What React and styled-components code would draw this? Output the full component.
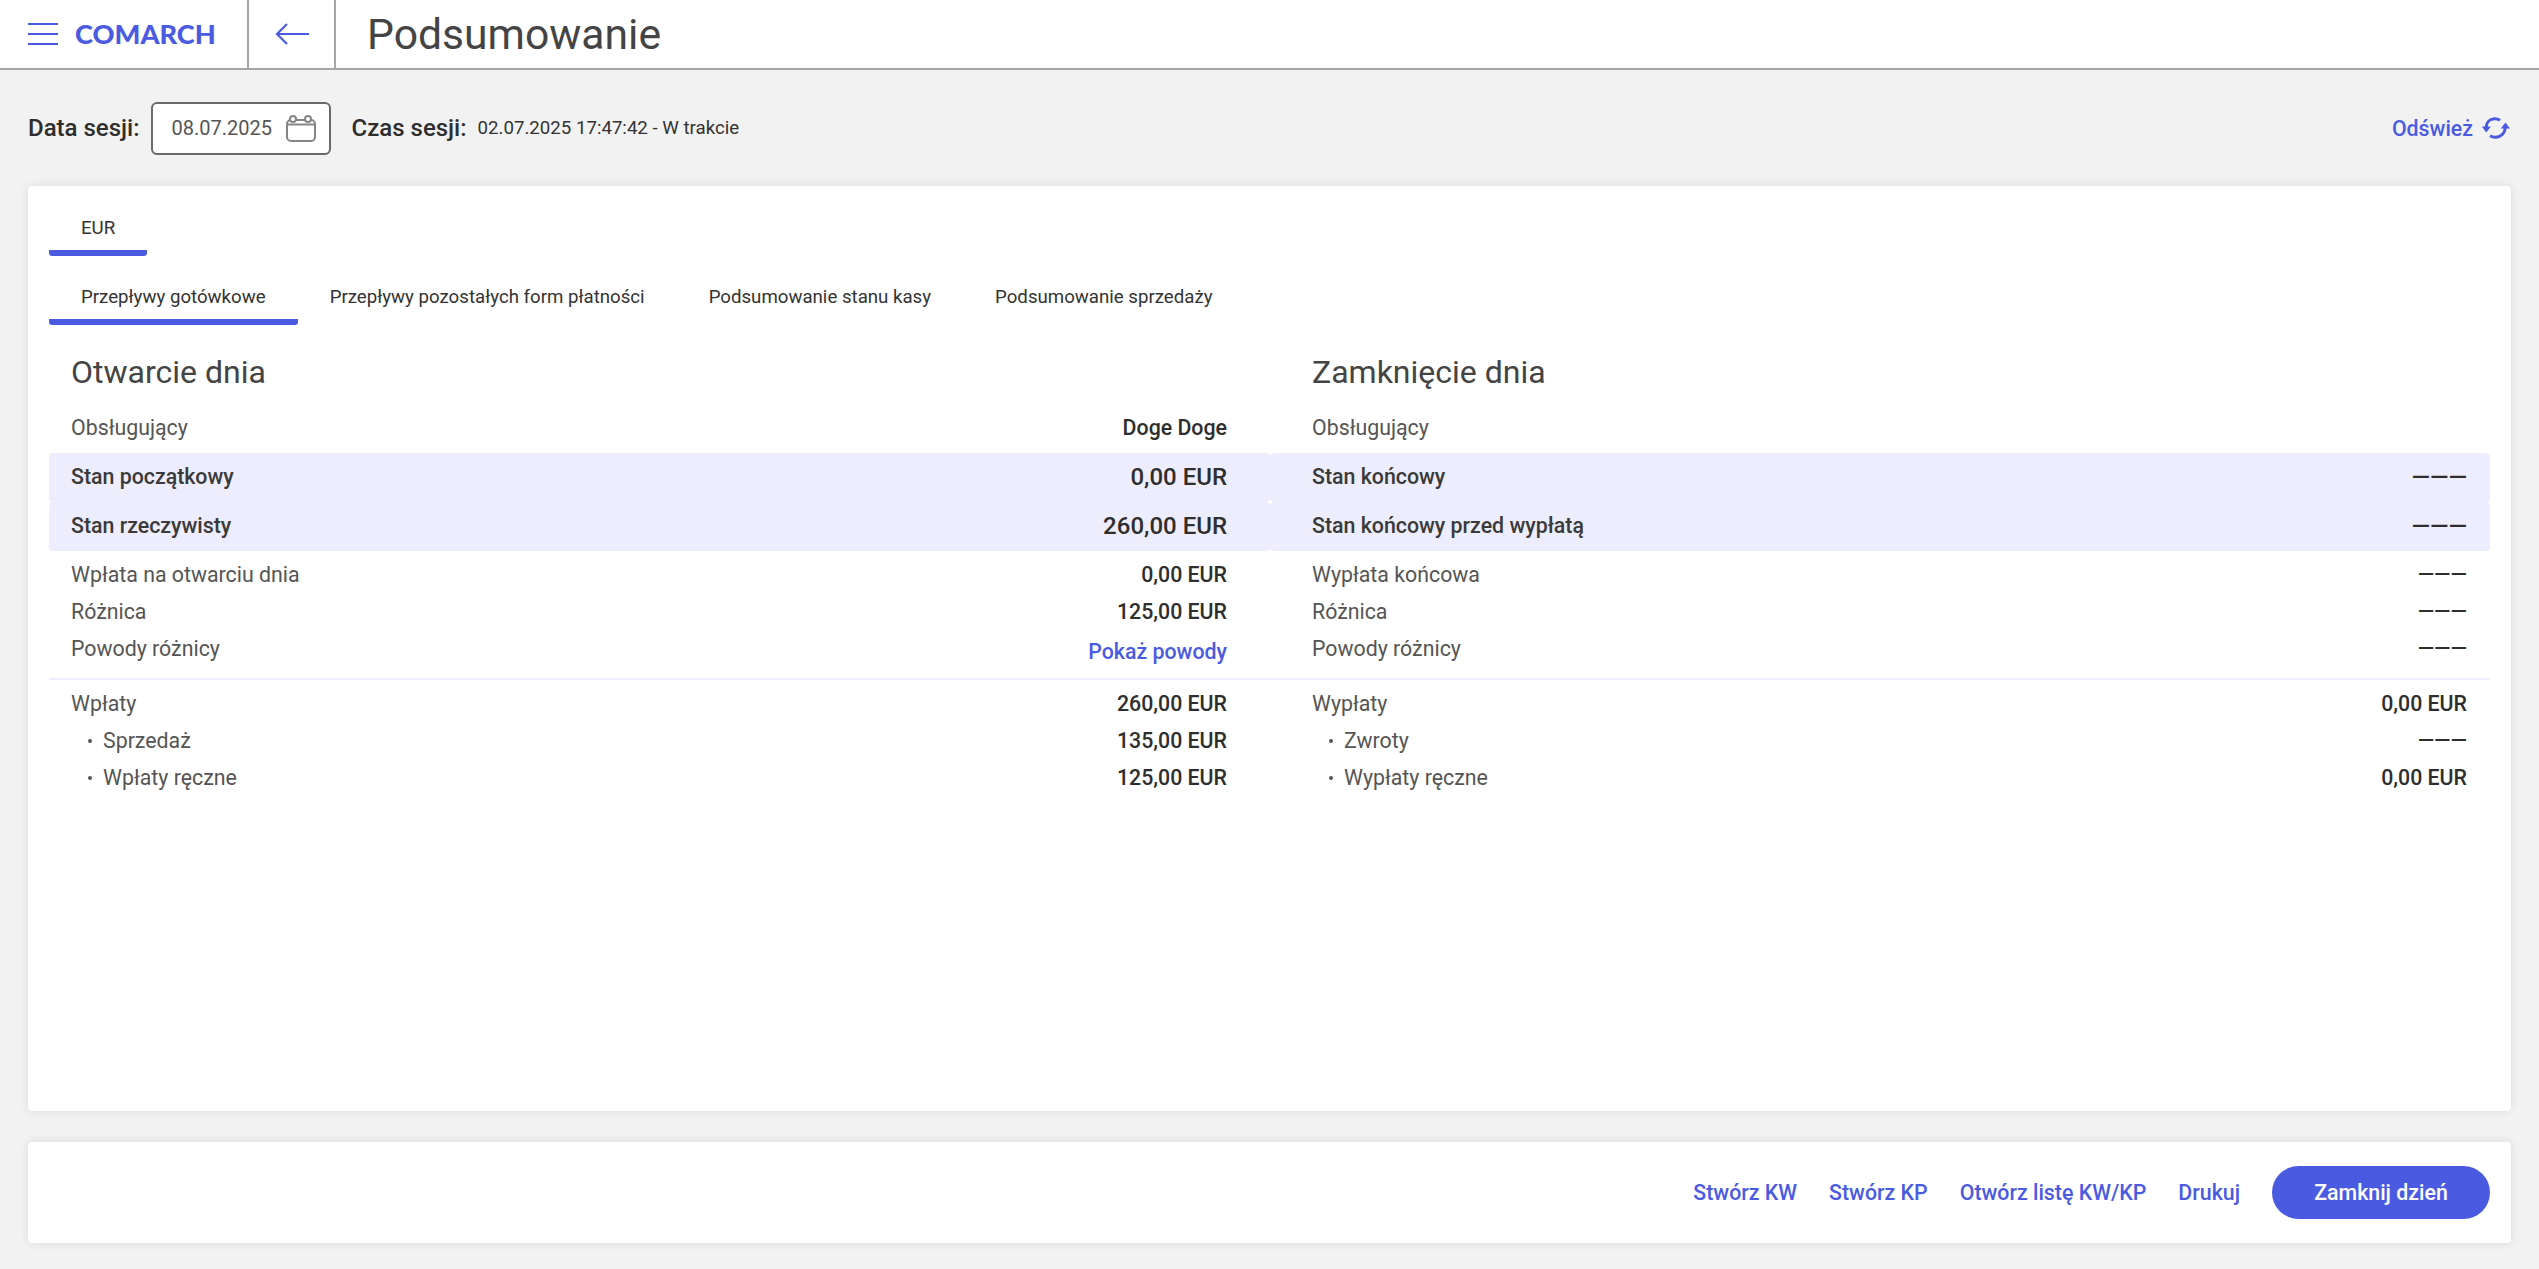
import React from "react";
import styled, { createGlobalStyle } from "styled-components";

const BLUE = "#4a5be2";

const Global = createGlobalStyle`
  html, body { margin: 0; padding: 0; height: 100%; background: #f2f2f2; }
  body { font-family: Roboto, "Liberation Sans", sans-serif; overflow: hidden; }
  #root { height: 100%; }
  * { box-sizing: border-box; }
`;

const Page = styled.div`
  height: 100vh;
  display: flex;
  flex-direction: column;
  padding-bottom: 26px;
`;

const Header = styled.header`
  height: 70px;
  flex: none;
  display: flex;
  align-items: stretch;
  background: #fff;
  border-bottom: 2px solid #a6a6a6;
`;

const Brand = styled.div`
  width: 249px;
  padding-left: 28px;
  display: flex;
  align-items: center;
  gap: 17px;
  border-right: 2px solid #a6a6a6;
`;

const Logo = styled.span`
  font-family: Lato, sans-serif;
  font-weight: 900;
  font-size: 27.2px;
  line-height: 1;
  color: ${BLUE};
`;

const BackButton = styled.div`
  width: 87px;
  display: flex;
  align-items: center;
  justify-content: center;
  border-right: 2px solid #a6a6a6;
`;

const PageTitle = styled.h1`
  margin: 0 0 0 31px;
  align-self: center;
  font-size: 42.67px;
  font-weight: 400;
  color: #444;
  line-height: 1;
`;

const Toolbar = styled.div`
  height: 116px;
  flex: none;
  padding: 0 29px 0 28px;
  display: flex;
  align-items: center;
`;

const ToolLabel = styled.span`
  font-size: 24px;
  font-weight: 500;
  color: #2e2e2e;
`;

const DateInput = styled.div`
  width: 180px;
  height: 53px;
  margin: 0 21px 0 11px;
  padding: 0 13px 0 19px;
  display: flex;
  align-items: center;
  justify-content: space-between;
  background: #fff;
  border: 2px solid #6a6a6a;
  border-radius: 6px;
  font-size: 20px;
  color: #555;
`;

const SessionValue = styled.span`
  margin-left: 11px;
  font-size: 18.67px;
  color: #333;
`;

const Refresh = styled.div`
  margin-left: auto;
  display: flex;
  align-items: center;
  gap: 9px;
  font-size: 21.33px;
  font-weight: 500;
  color: ${BLUE};
`;

const Card = styled.main`
  flex: 1;
  margin: 0 28px;
  padding: 20px 21px 0;
  background: #fff;
  border-radius: 4px;
  box-shadow: 0 0 10px rgba(0, 0, 0, 0.1);
`;

const TabBar = styled.div`
  display: flex;
  margin-bottom: ${(p) => p.$gap || 0}px;
`;

const Tab = styled.div`
  height: 50px;
  padding: 11px 32px 0;
  font-size: 18.67px;
  line-height: 22px;
  color: #333;
  border-bottom: 6px solid ${(p) => (p.$active ? BLUE : "transparent")};
  border-radius: 3px;
  white-space: nowrap;
`;

const Columns = styled.div`
  display: grid;
  grid-template-columns: 1221px 1220px;
  padding-top: 24px;
`;

const Column = styled.section`
  display: flex;
  flex-direction: column;
`;

const SectionTitle = styled.h2`
  margin: 0 0 14px;
  height: 46px;
  padding-left: ${(p) => (p.$side === "right" ? 42 : 22)}px;
  font-size: 32px;
  line-height: 46px;
  font-weight: 400;
  color: #444;
`;

const Row = styled.div`
  display: flex;
  align-items: center;
  justify-content: space-between;
  height: 37px;
  padding: ${(p) => (p.$side === "right" ? "0 23px 0 42px" : "0 43px 0 22px")};
`;

const BandGroup = styled.div`
  margin: 7px 0 5px;
`;

const BandRow = styled(Row)`
  height: 49px;
  padding-bottom: 2px;
  background: #eeedfd;
  border-radius: 4px;
`;

const Label = styled.span`
  font-size: 21.33px;
  color: #555;
`;

const StrongLabel = styled.span`
  font-size: 21.33px;
  font-weight: 500;
  color: #3a3a3a;
`;

const SubLabel = styled(Label)`
  display: flex;
  align-items: center;
  padding-left: 17px;
  gap: 11px;
  &::before {
    content: "";
    width: 4px;
    height: 4px;
    border-radius: 50%;
    background: #555;
  }
`;

const Value = styled.span`
  font-size: 21.33px;
  font-weight: 500;
  color: #2e2e2e;
`;

const BigValue = styled(Value)`
  font-size: 24px;
`;

const LinkValue = styled(Value)`
  margin-top: 6px;
  color: ${BLUE};
`;

const Separator = styled.div`
  height: 2px;
  margin: 11px 0 5px;
  background: #eeedfd;
`;

const Footer = styled.footer`
  height: 101px;
  flex: none;
  margin: 31px 28px 0;
  padding-right: 21px;
  display: flex;
  align-items: center;
  justify-content: flex-end;
  gap: 32px;
  background: #fff;
  border-radius: 4px;
  box-shadow: 0 0 10px rgba(0, 0, 0, 0.1);
`;

const FooterLink = styled.span`
  font-size: 21.33px;
  font-weight: 500;
  color: ${BLUE};
`;

const PrimaryButton = styled.button`
  width: 218px;
  height: 53px;
  border: 0;
  border-radius: 27px;
  background: ${BLUE};
  color: #fff;
  font-family: inherit;
  font-size: 21.33px;
  font-weight: 500;
`;

const Hamburger = () => (
  <svg width="30" height="22" viewBox="0 0 30 22" fill="none" stroke={BLUE} strokeWidth="2">
    <path d="M0 1h30M0 11h30M0 21h30" />
  </svg>
);

const BackArrow = () => (
  <svg width="34" height="22" viewBox="0 0 34 22" fill="none" stroke={BLUE} strokeWidth="2.2">
    <path d="M34 11H2M12 1L2 11l10 10" />
  </svg>
);

const CalendarIcon = () => (
  <svg width="30" height="27" viewBox="0 0 30 27" fill="none" stroke="#858585" strokeWidth="2">
    <rect x="1" y="5" width="28" height="21" rx="4" />
    <path d="M1 9.5h28" />
    <circle cx="7" cy="4" r="3" fill="#fff" />
    <circle cx="22" cy="4" r="3" fill="#fff" />
  </svg>
);

const RefreshIcon = () => (
  <svg width="28" height="22" viewBox="0 0 28 22" fill="none" stroke={BLUE} strokeWidth="3">
    <path d="M4.2 10C4.5 5 8 1.7 12.5 1.7c2 0 4 .4 5.5 1.5" />
    <path d="M8 18.8c2 1.2 4 1.7 6 1.5 5-.5 8.8-4 9.3-9.5" />
    <path d="M-.2 9.6h9l-4.5 5.8z M18.8 11.4h9.2l-4.6-6z" fill={BLUE} stroke="none" />
  </svg>
);

const DASH = "———";

const left = {
  main: [["Wpłata na otwarciu dnia", "0,00 EUR"], ["Różnica", "125,00 EUR"]],
  totals: ["Wpłaty", "260,00 EUR"],
  subs: [["Sprzedaż", "135,00 EUR"], ["Wpłaty ręczne", "125,00 EUR"]],
};

const right = {
  main: [["Wypłata końcowa", DASH], ["Różnica", DASH]],
  totals: ["Wypłaty", "0,00 EUR"],
  subs: [["Zwroty", DASH], ["Wypłaty ręczne", "0,00 EUR"]],
};

const Summary = ({ side, title, operator, bands, data, reasons }) => (
  <Column>
    <SectionTitle $side={side}>{title}</SectionTitle>
    <Row $side={side}>
      <Label>Obsługujący</Label>
      {operator && <Value>{operator}</Value>}
    </Row>
    <BandGroup>
      {bands.map(([k, v]) => (
        <BandRow key={k} $side={side}>
          <StrongLabel>{k}</StrongLabel>
          <BigValue>{v}</BigValue>
        </BandRow>
      ))}
    </BandGroup>
    {data.main.map(([k, v]) => (
      <Row key={k} $side={side}>
        <Label>{k}</Label>
        <Value>{v}</Value>
      </Row>
    ))}
    <Row $side={side}>
      <Label>Powody różnicy</Label>
      {reasons}
    </Row>
    <Separator />
    <Row $side={side}>
      <Label>{data.totals[0]}</Label>
      <Value>{data.totals[1]}</Value>
    </Row>
    {data.subs.map(([k, v]) => (
      <Row key={k} $side={side}>
        <SubLabel>{k}</SubLabel>
        <Value>{v}</Value>
      </Row>
    ))}
  </Column>
);

export default function App() {
  return (
    <Page>
      <Global />
      <Header>
        <Brand>
          <Hamburger />
          <Logo>COMARCH</Logo>
        </Brand>
        <BackButton>
          <BackArrow />
        </BackButton>
        <PageTitle>Podsumowanie</PageTitle>
      </Header>
      <Toolbar>
        <ToolLabel>Data sesji:</ToolLabel>
        <DateInput>
          08.07.2025
          <CalendarIcon />
        </DateInput>
        <ToolLabel>Czas sesji:</ToolLabel>
        <SessionValue>02.07.2025 17:47:42 - W trakcie</SessionValue>
        <Refresh>
          Odśwież
          <RefreshIcon />
        </Refresh>
      </Toolbar>
      <Card>
        <TabBar $gap={19}>
          <Tab $active>EUR</Tab>
        </TabBar>
        <TabBar>
          <Tab $active>Przepływy gotówkowe</Tab>
          <Tab>Przepływy pozostałych form płatności</Tab>
          <Tab>Podsumowanie stanu kasy</Tab>
          <Tab>Podsumowanie sprzedaży</Tab>
        </TabBar>
        <Columns>
          <Summary
            side="left"
            title="Otwarcie dnia"
            operator="Doge Doge"
            bands={[["Stan początkowy", "0,00 EUR"], ["Stan rzeczywisty", "260,00 EUR"]]}
            data={left}
            reasons={<LinkValue>Pokaż powody</LinkValue>}
          />
          <Summary
            side="right"
            title="Zamknięcie dnia"
            bands={[["Stan końcowy", DASH], ["Stan końcowy przed wypłatą", DASH]]}
            data={right}
            reasons={<Value>{DASH}</Value>}
          />
        </Columns>
      </Card>
      <Footer>
        <FooterLink>Stwórz KW</FooterLink>
        <FooterLink>Stwórz KP</FooterLink>
        <FooterLink>Otwórz listę KW/KP</FooterLink>
        <FooterLink>Drukuj</FooterLink>
        <PrimaryButton>Zamknij dzień</PrimaryButton>
      </Footer>
    </Page>
  );
}
